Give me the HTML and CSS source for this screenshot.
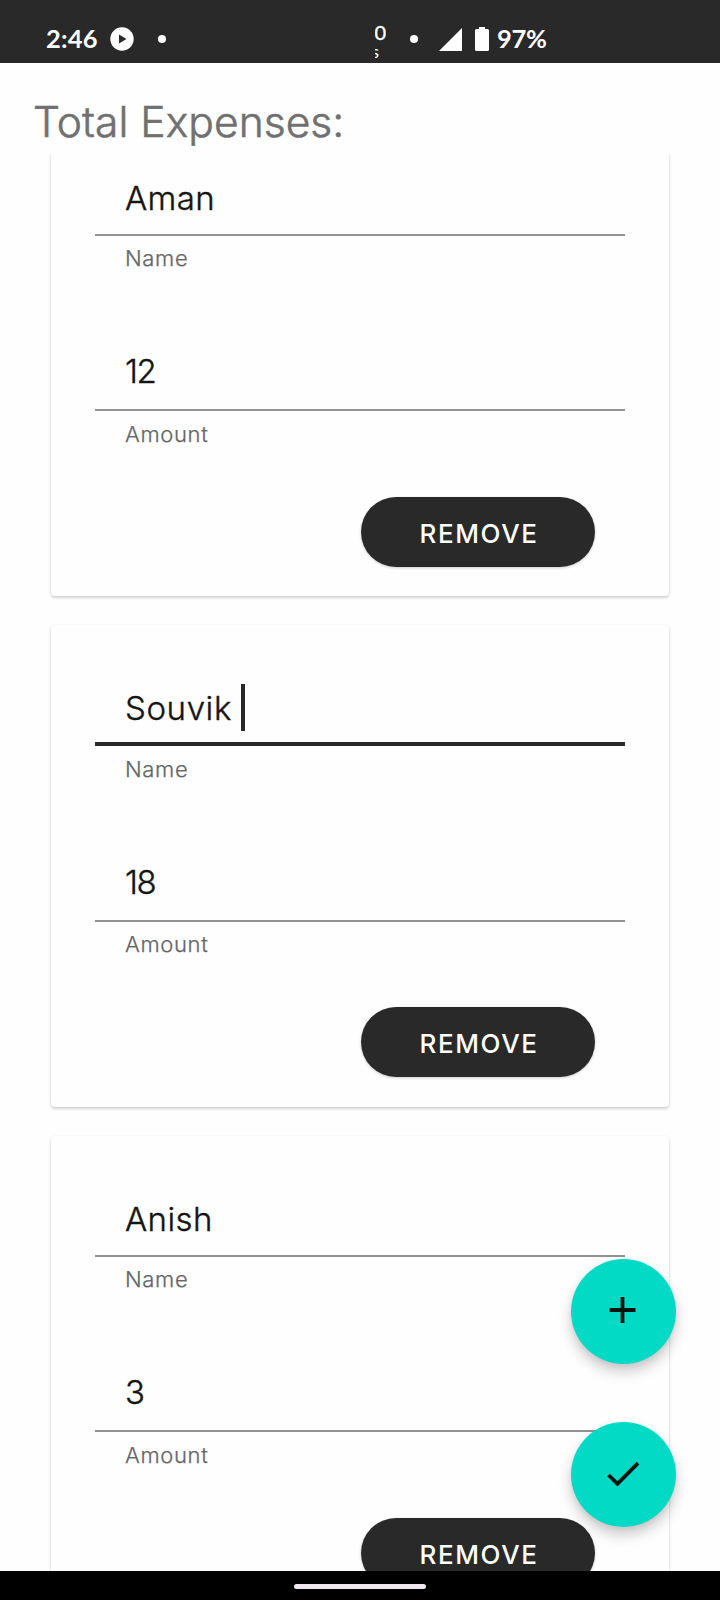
FILE: index.html
```html
<!DOCTYPE html>
<html lang="en">
<head>
<meta charset="utf-8">
<title>Total Expenses</title>
<link rel="stylesheet" href="styles.css">
</head>
<body>
<div class="screen">
  <header class="status">
    <span class="clock">2:46</span>
    <svg class="play" viewBox="0 0 24 24"><circle cx="12" cy="12" r="11.7" fill="#fff"/><path d="M9 7.5v9l7.5-4.5z" fill="#292929"/></svg>
    <span class="dot dot-left"></span>
    <span class="speed"><span class="speed-num">0</span><span class="speed-unit">s</span></span>
    <span class="dot dot-right"></span>
    <svg class="signal" viewBox="0 0 23 23"><path d="M23 0v23H0z" fill="#fff"/></svg>
    <svg class="battery" viewBox="0 0 14 24"><path d="M4 0h6v2h2.500q1.500 0 1.500 1.500v19q0 1.500-1.500 1.500h-11q-1.500 0-1.500-1.500v-19q0-1.500 1.500-1.500h2.500z" fill="#fff"/></svg>
    <span class="percent">97%</span>
  </header>
  <h1 class="title">Total Expenses:</h1>
  <main class="list">
    <section class="card">
      <div class="field"><div class="value"><span>Aman</span></div><div class="line"></div><div class="label">Name</div></div>
      <div class="field"><div class="value number">12</div><div class="line"></div><div class="label">Amount</div></div>
      <button class="remove">REMOVE</button>
    </section>
    <section class="card">
      <div class="field focused"><div class="value"><span class="typed">Souvik</span><i class="caret"></i></div><div class="line"></div><div class="label">Name</div></div>
      <div class="field"><div class="value number">18</div><div class="line"></div><div class="label">Amount</div></div>
      <button class="remove">REMOVE</button>
    </section>
    <section class="card">
      <div class="field"><div class="value"><span>Anish</span></div><div class="line"></div><div class="label">Name</div></div>
      <div class="field"><div class="value number">3</div><div class="line"></div><div class="label">Amount</div></div>
      <button class="remove">REMOVE</button>
    </section>
  </main>
  <footer class="nav"><span class="handle"></span></footer>
  <div class="fabs">
    <button class="fab" aria-label="Add"><svg viewBox="0 0 105 105"><path d="M38.500 51h26M51.500 38v26" fill="none" stroke="#08150f" stroke-width="3.800"/></svg></button>
    <button class="fab" aria-label="Done"><svg viewBox="0 0 105 105"><path d="M37.500 53l9 8.800 20.500-20.600" fill="none" stroke="#08150f" stroke-width="3.800"/></svg></button>
  </div>
</div>
</body>
</html>
```
FILE: styles.css
```css
* { box-sizing: border-box; }
body { margin: 0; background: #fefefe; font-family: Inter, "Liberation Sans", sans-serif; }
.screen { position: relative; width: 720px; height: 1600px; overflow: hidden; display: flex; flex-direction: column; }

.status { height: 63px; flex: none; background: #292929; color: #fff; display: flex; align-items: center; padding: 15px 0 0 46px; font-family: Lato, sans-serif; font-weight: 700; font-size: 25.5px; }
.clock { width: 64px; line-height: 29px; margin-top: -2px; letter-spacing: .2px; }
.play { width: 24px; height: 24px; }
.dot { width: 8px; height: 8px; border-radius: 50%; background: #fff; }
.dot-left { margin-left: 24px; }
.speed { display: flex; flex-direction: column; align-items: flex-end; width: 11px; height: 38px; margin-left: 209px; overflow: hidden; font-weight: 400; }
.speed-num { font-size: 20px; line-height: 24px; -webkit-text-stroke: .4px #fff; }
.speed-unit { font-size: 18px; line-height: 14px; margin-right: 7px; }
.dot-right { margin-left: 24px; }
.signal { width: 23px; height: 23px; margin-left: 21px; }
.battery { width: 14px; height: 24px; margin: 0 8px 0 13px; }
.percent { letter-spacing: -.3px; line-height: 29px; margin-top: -2px; }

.title { flex: none; height: 92px; margin: 0; padding: 33.5px 0 0 33px; font-size: 42.5px; line-height: 50px; font-weight: 300; -webkit-text-stroke: .6px #707070; letter-spacing: .05px; color: #707070; white-space: nowrap; }

.list { height: 1415.5px; flex: none; overflow: hidden; display: flex; flex-direction: column; gap: 29px; padding: 0 51px; }
.card { flex: none; height: 481.5px; padding: 59.2px 44px 0; border-radius: 4px; background: #fefefe; box-shadow: 0 2px 3px rgba(0,0,0,.17), 0 0 2px rgba(0,0,0,.08); }
.card:first-child { margin-top: -40.5px; }
.field { height: 175.8px; }
.value { height: 60px; padding-left: 30px; display: flex; font-size: 33px; line-height: 48px; font-weight: 300; -webkit-text-stroke: .4px #151515; letter-spacing: .4px; color: #151515; white-space: nowrap; }
.number { line-height: 45px; letter-spacing: -1.5px; }
.line { height: 2px; background: #929292; }
.label { padding: 9.500px 0 0 30px; font-size: 22px; line-height: 26px; font-weight: 300; -webkit-text-stroke: .25px #666; color: #666; letter-spacing: .65px; }
.focused .value { height: 58px; }
.focused .line { height: 4px; background: #292929; }
.typed { letter-spacing: .6px; }
.caret { width: 4px; height: 47px; margin-left: 9px; background: #292929; }
.remove { display: block; width: 234px; height: 70px; margin: -28.300px 30px 0 auto; padding: 4px 0 0 2px; border: 0; border-radius: 35px; background: #292929; color: #fff; font: 500 26px/36px Inter, sans-serif; letter-spacing: 1.6px; box-shadow: 0 1px 3px rgba(0,0,0,.2); }

.nav { height: 29.5px; flex: none; background: #000; padding: 13.500px 0 0 294px; }
.handle { display: block; width: 132px; height: 5px; border-radius: 3px; background: #eee8ec; }

.fabs { position: absolute; left: 571px; top: 1258.5px; display: flex; flex-direction: column; gap: 58.5px; }
.fab { width: 105px; height: 105px; padding: 0; border: 0; border-radius: 50%; background: #03dac6; box-shadow: 0 8px 14px rgba(0,0,0,.2), 0 2px 5px rgba(0,0,0,.06); }
.fab svg { display: block; width: 105px; height: 105px; }
```
